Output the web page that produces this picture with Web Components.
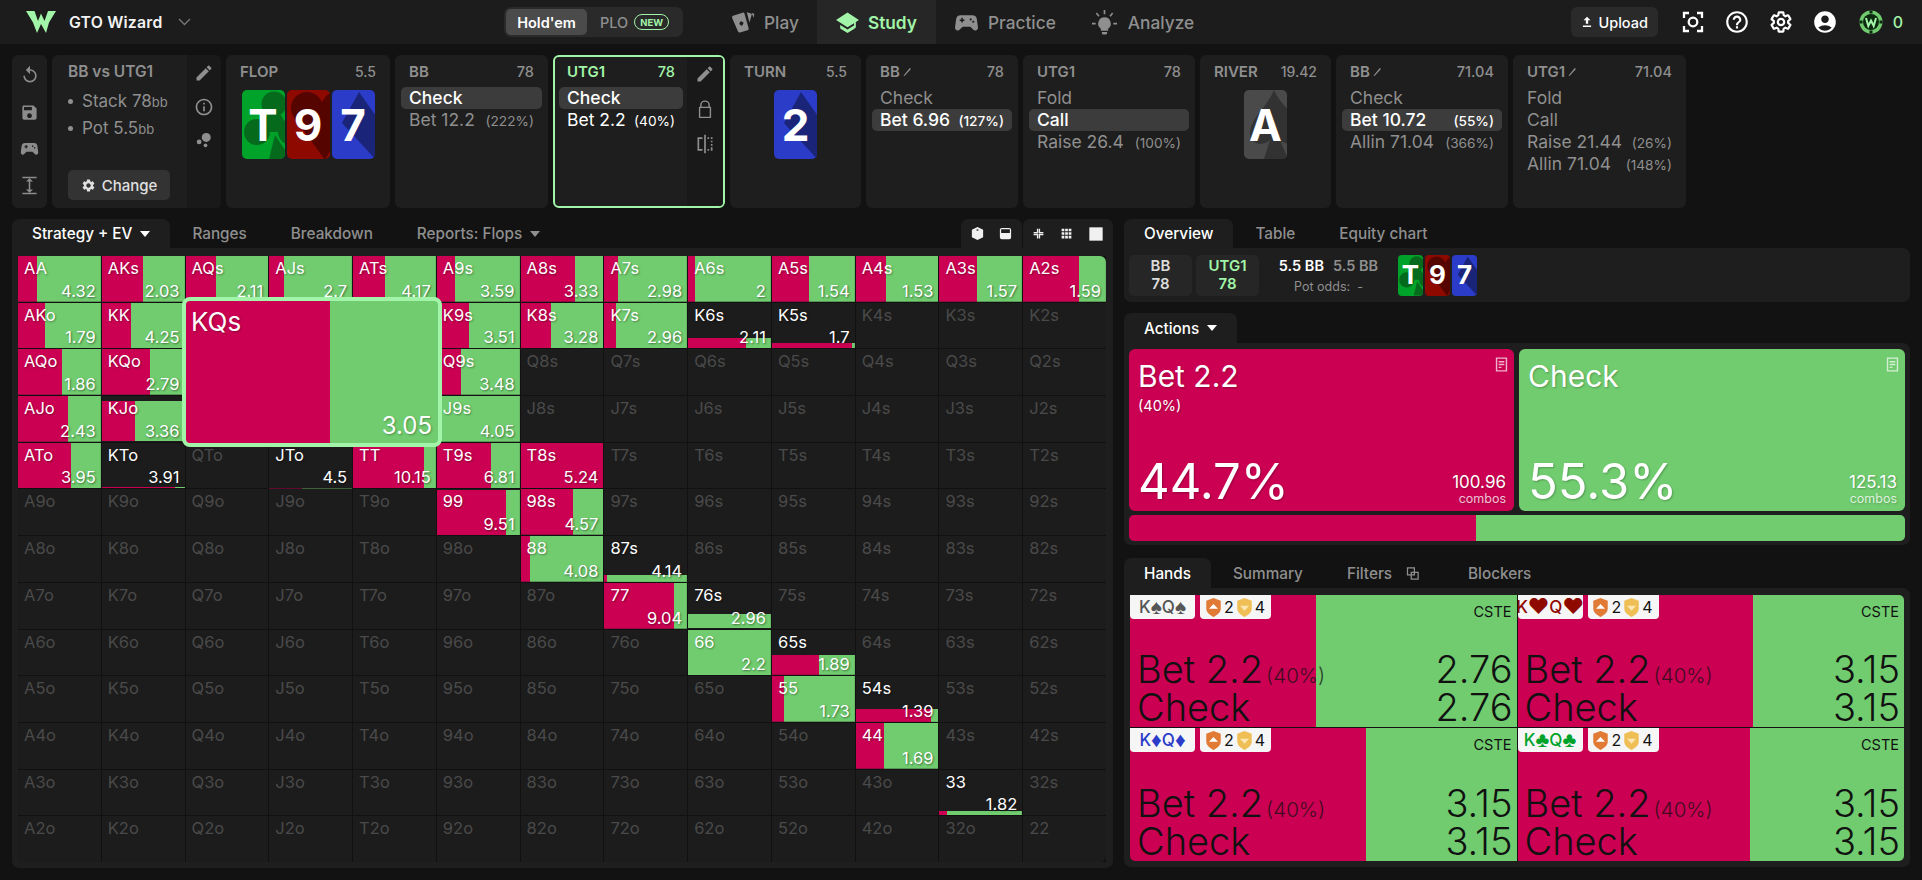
<!DOCTYPE html>
<html>
<head>
<meta charset="utf-8">
<title>GTO Wizard</title>
<style>
  html, body { margin: 0; height: 100%; }
  body {
    background: #121212;
    color: #fff;
    font-family: Inter, "Noto Sans", sans-serif;
    overflow: hidden;
  }
  .page { width: 1922px; height: 880px; display: flex; flex-direction: column; }
  .workspace { display: flex; gap: 11px; padding: 11px 12px 0; }
  .left-col { width: 1101px; display: flex; flex-direction: column; }
  .right-col { width: 786px; display: flex; flex-direction: column; }
</style>
</head>
<body>
<div class="page">
  <app-header></app-header>
  <spot-row>
    <tool-strip></tool-strip>
    <info-card></info-card>
    <street-card label="FLOP" pot="5.5" w="164">
      <poker-card rank="T" suit="c"></poker-card><poker-card rank="9" suit="h"></poker-card><poker-card rank="7" suit="d"></poker-card>
    </street-card>
    <spot-card label="BB" stack="78" w="153">
      <spot-action on>Check</spot-action>
      <spot-action pct="(222%)">Bet 12.2</spot-action>
    </spot-card>
    <spot-card label="UTG1" stack="78" w="172" current>
      <spot-action on>Check</spot-action>
      <spot-action pct="(40%)">Bet 2.2</spot-action>
    </spot-card>
    <street-card label="TURN" pot="5.5" w="131"><poker-card rank="2" suit="d"></poker-card></street-card>
    <spot-card label="BB" stack="78" w="152" edited>
      <spot-action>Check</spot-action>
      <spot-action on pct="(127%)">Bet 6.96</spot-action>
    </spot-card>
    <spot-card label="UTG1" stack="78" w="172">
      <spot-action>Fold</spot-action>
      <spot-action on>Call</spot-action>
      <spot-action pct="(100%)">Raise 26.4</spot-action>
    </spot-card>
    <street-card label="RIVER" pot="19.42" w="131"><poker-card rank="A" suit="s"></poker-card></street-card>
    <spot-card label="BB" stack="71.04" w="172" edited>
      <spot-action>Check</spot-action>
      <spot-action on pct="(55%)">Bet 10.72</spot-action>
      <spot-action pct="(366%)">Allin 71.04</spot-action>
    </spot-card>
    <spot-card label="UTG1" stack="71.04" w="173" edited>
      <spot-action>Fold</spot-action>
      <spot-action>Call</spot-action>
      <spot-action pct="(26%)">Raise 21.44</spot-action>
      <spot-action pct="(148%)">Allin 71.04</spot-action>
    </spot-card>
  </spot-row>
  <div class="workspace">
    <div class="left-col">
      <tab-bar>
        <tab-item active caret>Strategy + EV</tab-item>
        <tab-item>Ranges</tab-item>
        <tab-item>Breakdown</tab-item>
        <tab-item caret>Reports: Flops</tab-item>
        <view-tools slot="end"></view-tools>
      </tab-bar>
      <hand-matrix></hand-matrix>
    </div>
    <div class="right-col">
      <tab-bar>
        <tab-item active>Overview</tab-item>
        <tab-item>Table</tab-item>
        <tab-item>Equity chart</tab-item>
      </tab-bar>
      <overview-strip></overview-strip>
      <tab-bar style="margin-top:11px;height:30px">
        <tab-item active caret>Actions</tab-item>
      </tab-bar>
      <actions-panel>
        <action-card label="Bet 2.2" sub="(40%)" share="44.7%" combos="100.96" tone="red" style="width:385px"></action-card>
        <action-card label="Check" share="55.3%" combos="125.13" tone="green" style="width:386px"></action-card>
      </actions-panel>
      <tab-bar style="margin-top:13px;height:30px">
        <tab-item active>Hands</tab-item>
        <tab-item>Summary</tab-item>
        <tab-item copy>Filters</tab-item>
        <tab-item>Blockers</tab-item>
      </tab-bar>
      <hands-panel>
        <combo-card a="K" b="Q" suit="s" ev="2.76" red="48"></combo-card>
        <combo-card a="K" b="Q" suit="h" ev="3.15" red="61"></combo-card>
        <combo-card a="K" b="Q" suit="d" ev="3.15" red="61"></combo-card>
        <combo-card a="K" b="Q" suit="c" ev="3.15" red="60"></combo-card>
      </hands-panel>
    </div>
  </div>
</div>

<script>
const RED = '#cb0052';
const GREEN = '#70cc6f';
const MINT = '#a2f5a8';

const PATHS = {
  refresh: '<path d="M12 5V1L7 6l5 5V7c3.310 0 6 2.690 6 6s-2.690 6-6 6-6-2.690-6-6H4c0 4.420 3.580 8 8 8s8-3.580 8-8-3.580-8-8-8z"/>',
  save: '<path d="M17 3H5c-1.110 0-2 .9-2 2v14c0 1.100.89 2 2 2h14c1.100 0 2-.9 2-2V7l-4-4zm-5 16c-1.660 0-3-1.340-3-3s1.340-3 3-3 3 1.340 3 3-1.340 3-3 3zm3-10H5V5h10v4z"/>',
  pad: '<path fill-rule="evenodd" d="M6.500 5h11a4.600 4.600 0 0 1 4.500 4l1 7.600a2.600 2.600 0 0 1-4.600 2.100L15.700 16H8.300l-2.700 2.700A2.600 2.600 0 0 1 1 16.600L2 9a4.600 4.600 0 0 1 4.500-4zM7 7.500V9H5.500v1.500H7V12h1.500v-1.500H10V9H8.500V7.500zM16 8a1 1 0 1 0 0 2 1 1 0 0 0 0-2zm2.500 2.200a1 1 0 1 0 0 2 1 1 0 0 0 0-2z"/>',
  height: '<path d="M13 7h3.500L12 2.800 7.500 7H11v10H7.500l4.500 4.200 4.500-4.200H13zM3 .8h18v2H3zM3 21.200h18v2H3z"/>',
  edit: '<path d="M3 17.250V21h3.750L17.810 9.940l-3.750-3.750L3 17.250zM20.710 7.040c.39-.39.39-1.020 0-1.410l-2.340-2.340c-.39-.39-1.020-.39-1.410 0l-1.830 1.830 3.750 3.750 1.830-1.830z"/>',
  info: '<path d="M11 7h2v2h-2zm0 4h2v6h-2zm1-9C6.480 2 2 6.480 2 12s4.480 10 10 10 10-4.480 10-10S17.520 2 12 2zm0 18c-4.410 0-8-3.590-8-8s3.590-8 8-8 8 3.590 8 8-3.590 8-8 8z"/>',
  bubbles: '<circle cx="15" cy="8.500" r="6"/><circle cx="5.500" cy="14.500" r="3.200"/><circle cx="14" cy="19" r="2.500"/>',
  lock: '<path fill="none" stroke="currentColor" stroke-width="1.700" d="M7 10V7.500a5 5 0 0 1 10 0V10M5.500 10h13v12h-13z" stroke-linejoin="round"/>',
  split: '<path d="M11 1h2v22h-2zM3 4h6v2H5v12h4v2H3zM15 4h2v2h-2zM19 4h2v2h-2zM19 8h2v2h-2zM19 12h2v2h-2zM19 16h2v2h-2zM19 18h2v2h-2zM15 18h2v2h-2z"/>',
  gear: '<path d="M19.140 12.940c.04-.3.06-.61.06-.94 0-.32-.02-.64-.07-.94l2.030-1.580a.49.49 0 0 0 .12-.61l-1.920-3.320a.488.488 0 0 0-.59-.22l-2.390.96c-.5-.38-1.030-.7-1.620-.94l-.36-2.540a.484.484 0 0 0-.48-.41h-3.840c-.24 0-.43.17-.47.41l-.36 2.540c-.59.24-1.130.57-1.620.94l-2.390-.96c-.22-.08-.47 0-.59.22L2.740 8.870c-.12.21-.08.47.12.61l2.030 1.580c-.05.3-.09.63-.09.94s.02.64.07.94l-2.030 1.580a.49.49 0 0 0-.12.61l1.920 3.320c.12.22.37.29.59.22l2.390-.96c.5.38 1.030.7 1.620.94l.36 2.540c.05.24.24.41.48.41h3.840c.24 0 .44-.17.47-.41l.36-2.540c.59-.24 1.130-.56 1.620-.94l2.390.96c.22.08.47 0 .59-.22l1.920-3.320c.12-.22.07-.47-.12-.61l-2.010-1.580zM12 15.600c-1.980 0-3.600-1.620-3.600-3.600s1.620-3.600 3.600-3.600 3.600 1.620 3.600 3.600-1.620 3.600-3.600 3.600z"/>',
  gearline: '<path fill="none" stroke="currentColor" stroke-width="2.200" stroke-linejoin="round" d="M19.140 12.940c.04-.3.06-.61.06-.94 0-.32-.02-.64-.07-.94l2.030-1.580a.49.49 0 0 0 .12-.61l-1.920-3.320a.488.488 0 0 0-.59-.22l-2.390.96c-.5-.38-1.030-.7-1.620-.94l-.36-2.540a.484.484 0 0 0-.48-.41h-3.840c-.24 0-.43.17-.47.41l-.36 2.540c-.59.24-1.130.57-1.620.94l-2.390-.96c-.22-.08-.47 0-.59.22L2.740 8.870c-.12.21-.08.47.12.61l2.030 1.580c-.05.3-.09.63-.09.94s.02.64.07.94l-2.030 1.580a.49.49 0 0 0-.12.61l1.920 3.320c.12.22.37.29.59.22l2.390-.96c.5.38 1.030.7 1.620.94l.36 2.540c.05.24.24.41.48.41h3.840c.24 0 .44-.17.47-.41l.36-2.540c.59-.24 1.130-.56 1.620-.94l2.390.96c.22.08.47 0 .59-.22l1.920-3.320c.12-.22.07-.47-.12-.61l-2.010-1.580z"/><circle cx="12" cy="12" r="3.200" fill="none" stroke="currentColor" stroke-width="2.200"/>',
  cards: '<path d="M15.500 3l3.800 1.200c.6.200.8.700.7 1.200L18 12.500zM2.800 6.300l8.800-2.900c.8-.3 1.500.1 1.800.9l3.800 13.500c.2.8-.2 1.500-1 1.800l-7 2.100c-.8.2-1.500-.2-1.800-1L2 8.200c-.2-.8.100-1.600.800-1.900zM10 11l-1.600 2.800 2.700 1.800 1.500-2.800z" fill-rule="evenodd"/><path d="M20 3.500l2.500 1-.8 3.500z"/>',
  study: '<path d="M12 2.500L23 9.500l-3 2V17h-1.700v-4.200L12 16.500 1 9.500zM5 14.500l7 4.300 7-4.300v3.200L12 22l-7-4.300z"/>',
  bulb: '<path d="M12 7a6 6 0 0 0-3.500 10.900V20h7v-2.100A6 6 0 0 0 12 7zM9.500 21h5v1.500l-1 1h-3l-1-1z"/><path d="M11.200 0h1.600v4h-1.600zM3.600 3.400l1.200-1 2.400 3-1.200 1zM20.400 3.400l-1.200-1-2.400 3 1.200 1zM0 12.300h3.500v1.600H0zM20.500 12.300H24v1.600h-3.500z"/>',
  upload: '<path d="M12 3l6 6h-4v6h-4V9H6zM5 18h14v2.500H5z"/>',
  scan: '<path fill="none" stroke="currentColor" stroke-width="2.300" d="M3 8V3h5M16 3h5v5M21 16v5h-5M8 21H3v-5"/><circle cx="12" cy="12" r="4.300" fill="none" stroke="currentColor" stroke-width="2.300"/>',
  help: '<path d="M11 18h2v-2h-2v2zm1-16C6.480 2 2 6.480 2 12s4.480 10 10 10 10-4.480 10-10S17.520 2 12 2zm0 18c-4.410 0-8-3.590-8-8s3.590-8 8-8 8 3.590 8 8-3.590 8-8 8zm0-14c-2.210 0-4 1.790-4 4h2c0-1.100.9-2 2-2s2 .9 2 2c0 2-3 1.750-3 5h2c0-2.250 3-2.500 3-5 0-2.210-1.790-4-4-4z"/>',
  user: '<path d="M12 2C6.480 2 2 6.480 2 12s4.480 10 10 10 10-4.480 10-10S17.520 2 12 2zm0 4c1.930 0 3.500 1.570 3.500 3.500S13.930 13 12 13s-3.500-1.570-3.500-3.500S10.070 6 12 6zm0 14c-2.030 0-4.430-.82-6.140-2.880a9.947 9.947 0 0 1 12.280 0C16.430 19.180 14.030 20 12 20z"/>',
  chip: '<circle cx="12" cy="12" r="11.500" fill="#70cc6f"/><circle cx="12" cy="12" r="8" fill="#0d2a10"/><path d="M7 8l2.300 8L12 10.500 14.700 16 17 8" fill="none" stroke="#a2f5a8" stroke-width="2"/><path d="M10.500 .5h3v3h-3zM10.500 20.500h3v3h-3zM.5 10.500h3v3h-3zM20.500 10.500h3v3h-3z" fill="#0d2a10"/>',
  doc: '<path d="M4 2h16v20H4zM6 4v16h12V4zM8 7h8v2H8zM8 11h8v2H8zM8 15h4v2H8z" fill-rule="evenodd"/>',
  copy: '<path fill="none" stroke="currentColor" stroke-width="2" d="M4 3h11v11H4zM10 10h11v11H10z"/>',
  cube: '<path d="M12 1.500l9 4.500v12l-9 4.500L3 18V6zM12 5L9.500 6.300 12 7.500l2.500-1.200z" fill-rule="evenodd"/>',
  panel: '<path d="M6 3h12a3 3 0 0 1 3 3v12a3 3 0 0 1-3 3H6a3 3 0 0 1-3-3V6a3 3 0 0 1 3-3zm-1 2v6h14V5z" fill-rule="evenodd"/>',
  compress: '<path d="M3 9h6V3h2.500v8.500H3zM21 9h-6V3h-2.500v8.500H21zM3 15h6v6h2.500v-8.500H3zM21 15h-6v6h-2.500v-8.500H21z"/>',
  grid: '<path d="M3 3h5v5H3zM9.500 3h5v5h-5zM16 3h5v5h-5zM3 9.500h5v5H3zM9.500 9.500h5v5h-5zM16 9.500h5v5h-5zM3 16h5v5H3zM9.500 16h5v5h-5zM16 16h5v5h-5z"/>',
  square: '<path d="M2 2h20v20H2z"/>',
  slash: '<path d="M6 21l-2.500 1 1-2.500L17 4.500l2.500 2z"/>'
};

const icon = (name, size) =>
  `<svg viewBox="0 0 24 24" width="${size}" height="${size}" fill="currentColor" style="display:block;flex:none">${PATHS[name]}</svg>`;

const caret = (color = 'currentColor') =>
  `<svg viewBox="0 0 10 6" width="10" height="6" style="display:block;flex:none"><path d="M0 0h10L5 6z" fill="${color}"/></svg>`;

class AppHeader extends HTMLElement {
  constructor() {
    super();
    this.attachShadow({ mode: 'open' });
  }
  connectedCallback() {
    this.shadowRoot.innerHTML = `
      <style>
        :host { display: flex; align-items: stretch; height: 44px; background: #1c1c1c; flex: none; }
        .brand { width: 504px; padding-left: 26px; box-sizing: border-box; display: flex; align-items: center; }
        .brand svg.logo { width: 30px; height: 22px; margin-right: 13px; }
        .brand b { font-size: 15.800px; font-weight: 600; letter-spacing: .2px; color: #f2f2f2; }
        .brand .chev { margin-left: 16px; color: #777; }
        .toggle { margin: 7px 0; width: 179px; box-sizing: border-box; padding: 2px; background: #2a2a2a; border-radius: 7px; display: flex; align-items: center; font-size: 14.500px; font-weight: 600; }
        .toggle .on { width: 81px; height: 26px; border-radius: 5px; background: #4b4b4b; display: flex; align-items: center; justify-content: center; color: #fff; }
        .toggle .plo { margin-left: 13px; color: #8f8f8f; font-weight: 500; }
        .toggle .new { margin-left: 6px; width: 35px; height: 16px; box-sizing: border-box; border: 1px solid ${MINT}; border-radius: 9px; color: ${MINT}; font-size: 9.500px; font-weight: 700; display: flex; align-items: center; justify-content: center; }
        nav { margin-left: 29px; display: flex; }
        nav a { display: flex; align-items: center; gap: 8px; padding: 0 18px; font-size: 17.300px; font-weight: 500; color: #8f8f8f; }
        nav a.on { background: #262626; color: ${MINT}; font-weight: 600; padding-right: 19px; }
        nav a.wide { gap: 9px; }
        nav a.wider { gap: 11px; }
        .end { margin-left: auto; padding-right: 19px; display: flex; align-items: center; }
        .upload { width: 87px; height: 30px; margin-right: 23px; background: #2a2a2a; border-radius: 6px; display: flex; align-items: center; justify-content: center; gap: 4px; font-size: 14.500px; font-weight: 500; color: #fff; }
        .tools { display: flex; gap: 19px; color: #fff; align-items: center; }
        .zero { margin-left: 10px; color: ${MINT}; font-size: 16px; font-weight: 500; }
      </style>
      <div class="brand">
        <svg class="logo" viewBox="0 0 30 22"><path fill="${MINT}" d="M0 0h8.500l3.500 10 3-7.500L18.500 10 22 0h8l-7 11.500-3 10.500-5-9-4 9-4-10.500z"/></svg>
        <b>GTO Wizard</b>
        <svg class="chev" width="13" height="8" viewBox="0 0 13 8"><path d="M1 1l5.500 5.500L12 1" fill="none" stroke="currentColor" stroke-width="1.400"/></svg>
      </div>
      <div class="toggle"><span class="on">Hold'em</span><span class="plo">PLO</span><span class="new">NEW</span></div>
      <nav>
        <a>${icon('cards', 26)}Play</a>
        <a class="on">${icon('study', 25)}Study</a>
        <a class="wide">${icon('pad', 25)}Practice</a>
        <a class="wider">${icon('bulb', 25)}Analyze</a>
      </nav>
      <div class="end">
        <div class="upload">${icon('upload', 14)}Upload</div>
        <div class="tools">${icon('scan', 24)}${icon('help', 26)}${icon('gearline', 24)}${icon('user', 26)}</div>
        <div style="margin-left:21px">${icon('chip', 24)}</div>
        <span class="zero">0</span>
      </div>`;
  }
}

class SpotRow extends HTMLElement {
  constructor() {
    super();
    this.attachShadow({ mode: 'open' }).innerHTML = `
      <style>:host { display: flex; gap: 5px; padding: 11px 12px 0; height: 153px; flex: none; }</style>
      <slot></slot>`;
  }
}

class ToolStrip extends HTMLElement {
  constructor() {
    super();
    this.attachShadow({ mode: 'open' }).innerHTML = `
      <style>
        :host { width: 35px; background: #1e1e1e; border-radius: 6px; color: #8c8c8c; display: flex; flex-direction: column; align-items: center; justify-content: space-between; padding: 10px 0 13px; box-sizing: border-box; }
      </style>
      ${icon('refresh', 20)}${icon('save', 19)}${icon('pad', 19)}${icon('height', 19)}`;
  }
}

class InfoCard extends HTMLElement {
  constructor() {
    super();
    this.attachShadow({ mode: 'open' }).innerHTML = `
      <style>
        :host { width: 169px; display: flex; background: #1e1e1e; border-radius: 6px; overflow: hidden; color: #8f8f8f; }
        .body { flex: 1; padding: 8px 0 8px 16px; display: flex; flex-direction: column; }
        .title { font-size: 15.500px; font-weight: 600; line-height: 18px; margin-bottom: 7px; }
        .line { display: flex; align-items: baseline; font-size: 17px; line-height: 26px; }
        .line i { font-style: normal; font-size: 13px; }
        .line::before { content: ""; width: 5px; height: 5px; border-radius: 50%; background: #8f8f8f; margin: 0 9px 0 0; align-self: center; }
        .change { margin-top: auto; width: 102px; height: 30px; border-radius: 5px; background: #333; color: #e0e0e0; font-size: 15px; font-weight: 500; display: flex; align-items: center; justify-content: center; gap: 6px; }
        .side { width: 34px; background: #191919; display: flex; flex-direction: column; align-items: center; padding-top: 8px; gap: 14px; }
      </style>
      <div class="body">
        <div class="title">BB vs UTG1</div>
        <div class="line">Stack 78<i>bb</i></div>
        <div class="line">Pot 5.5<i>bb</i></div>
        <div class="change">${icon('gear', 15)}Change</div>
      </div>
      <div class="side">${icon('edit', 20)}${icon('info', 20)}${icon('bubbles', 18)}</div>`;
  }
}

class StreetCard extends HTMLElement {
  constructor() {
    super();
    this.attachShadow({ mode: 'open' });
  }
  connectedCallback() {
    this.shadowRoot.innerHTML = `
      <style>
        :host { display: flex; flex-direction: column; width: ${this.getAttribute('w')}px; background: #1e1e1e; border-radius: 6px; box-sizing: border-box; padding: 8px 14px 0; color: #8f8f8f; }
        .head { display: flex; justify-content: space-between; font-size: 15px; font-weight: 600; line-height: 17px; }
        .head span + span { font-weight: 500; font-size: 14px; }
        .cards { margin-top: 10px; display: flex; gap: 2px; justify-content: center; }
      </style>
      <div class="head"><span>${this.getAttribute('label')}</span><span>${this.getAttribute('pot')}</span></div>
      <div class="cards"><slot></slot></div>`;
  }
}

const SUITS = {
  c: ['#00a32a', '#066a1c', '<circle cx="32" cy="14" r="12.500"/><circle cx="15" cy="42" r="13"/><circle cx="49" cy="42" r="13"/><path d="M32 14L15 42h34zM33 45L27 69h22z"/>'],
  h: ['#8e0a00', '#560400', '<circle cx="20" cy="18" r="16"/><circle cx="50" cy="18" r="16"/><path d="M5.500 25L38 70 62 25 35 12z"/>'],
  d: ['#2a3cc8', '#1a2478', '<path d="M27 2L48 32 46 72 10 33z"/>'],
  s: ['#4a4a4a', '#323232', '<path d="M30 0C24 16 6 28 6 44c0 10 13 13 20 6l-6 19h24l-8-19c7 7 22 4 22-6C58 28 36 16 30 0z"/>']
};

class PokerCard extends HTMLElement {
  constructor() {
    super();
    this.attachShadow({ mode: 'open' });
  }
  connectedCallback() {
    const [bg, dark, shape] = SUITS[this.getAttribute('suit')];
    const mini = this.hasAttribute('mini');
    const w = mini ? 25 : 43;
    const h = mini ? 41 : 69;
    this.shadowRoot.innerHTML = `
      <style>
        :host { display: grid; width: ${w}px; height: ${h}px; border-radius: ${mini ? 4 : 5}px; overflow: hidden; background: ${bg}; flex: none; }
        svg, b { grid-area: 1 / 1; }
        svg { width: 100%; height: 100%; display: block; }
        b { place-self: center; font-size: ${mini ? 26 : 44}px; font-weight: 700; line-height: 1; color: #fff; }
      </style>
      <svg viewBox="0 0 43 69" fill="${dark}">${shape}</svg>
      <b>${this.getAttribute('rank')}</b>`;
  }
}

class SpotCard extends HTMLElement {
  constructor() {
    super();
    this.attachShadow({ mode: 'open' });
  }
  connectedCallback() {
    const current = this.hasAttribute('current');
    const edited = this.hasAttribute('edited');
    this.shadowRoot.innerHTML = `
      <style>
        :host { display: flex; width: ${this.getAttribute('w')}px; background: #1e1e1e; border-radius: 6px; box-sizing: border-box; overflow: hidden; color: ${current ? '#fff' : '#8f8f8f'}; ${current ? `border: 2px solid ${MINT};` : ''} }
        .main { flex: 1; min-width: 0; padding: ${current ? '6px 4px 0 4px' : '8px 6px 0 6px'}; }
        .head { display: flex; align-items: center; justify-content: space-between; padding: 0 8px; font-size: 15px; font-weight: 600; line-height: 17px; margin-bottom: 7px; color: ${current ? MINT : '#8f8f8f'}; }
        .head span { display: flex; align-items: center; gap: 2px; }
        .head span + span { font-size: 14.500px; font-weight: 500; }
        .side { width: 36px; background: #191919; display: flex; flex-direction: column; align-items: center; padding-top: 7px; gap: 15px; color: #8f8f8f; }
      </style>
      <div class="main">
        <div class="head"><span>${this.getAttribute('label')}${edited ? icon('slash', 11) : ''}</span><span>${this.getAttribute('stack')}</span></div>
        <slot></slot>
      </div>
      ${current ? `<div class="side">${icon('edit', 20)}${icon('lock', 20)}${icon('split', 20)}</div>` : ''}`;
  }
}

class SpotAction extends HTMLElement {
  constructor() {
    super();
    this.attachShadow({ mode: 'open' });
  }
  connectedCallback() {
    const on = this.hasAttribute('on');
    const pct = this.getAttribute('pct');
    this.shadowRoot.innerHTML = `
      <style>
        :host { display: flex; justify-content: space-between; align-items: baseline; height: 22px; line-height: 22px; padding: 0 8px; border-radius: 5px; font-size: 17.500px; white-space: nowrap; ${on ? 'background: #3c3c3c; color: #fff; font-weight: 500;' : ''} }
        small { font-size: 13.700px; }
      </style>
      <span><slot></slot></span>${pct ? `<small>${pct}</small>` : ''}`;
  }
}

class TabBar extends HTMLElement {
  constructor() {
    super();
    this.attachShadow({ mode: 'open' }).innerHTML = `
      <style>
        :host { display: flex; height: 29px; flex: none; }
        .end { margin-left: auto; display: flex; }
      </style>
      <slot></slot><div class="end"><slot name="end"></slot></div>`;
  }
}

class TabItem extends HTMLElement {
  constructor() {
    super();
    this.attachShadow({ mode: 'open' });
  }
  connectedCallback() {
    const active = this.hasAttribute('active');
    const copy = this.hasAttribute('copy');
    const trail = this.hasAttribute('caret') ? caret() : copy ? icon('copy', 15) : '';
    this.shadowRoot.innerHTML = `
      <style>
        :host { display: flex; align-items: center; gap: ${copy ? 13 : 8}px; padding: 0 ${copy ? 26 : active ? 20 : 22}px 0 ${active ? 20 : 22}px; font-size: 15.300px; font-weight: 500; white-space: nowrap; border-radius: 7px 7px 0 0; color: ${active ? '#fff' : '#8f8f8f'}; ${active ? 'background: #1e1e1e;' : ''} }
      </style>
      <slot></slot>${trail}`;
  }
}

class ViewTools extends HTMLElement {
  constructor() {
    super();
    this.attachShadow({ mode: 'open' }).innerHTML = `
      <style>
        :host { display: flex; gap: 1px; color: #f0f0f0; }
        div { display: flex; align-items: center; justify-content: center; background: #1e1e1e; border-radius: 7px 7px 0 0; width: 61px; gap: 13px; }
        div + div { width: 90px; gap: 15px; }
      </style>
      <div>${icon('cube', 15)}${icon('panel', 15)}</div>
      <div>${icon('compress', 13)}${icon('grid', 13)}${icon('square', 16)}</div>`;
  }
}

class HandCell extends HTMLElement {
  constructor() {
    super();
    this.attachShadow({ mode: 'open' });
  }
  connectedCallback() {
    const value = this.getAttribute('value');
    const red = this.getAttribute('red');
    const bar = this.getAttribute('bar') || 100;
    const inRange = value !== null;
    const fill = inRange
      ? `background: linear-gradient(to right, ${RED} ${red}%, ${GREEN} ${red}%) bottom / 100% ${bar}% no-repeat #1c1c1c;`
      : 'background: #1c1c1c;';
    this.shadowRoot.innerHTML = `
      <style>
        :host { display: flex; flex-direction: column; justify-content: space-between; padding: 2px 5px 1px 6px; overflow: hidden; min-width: 0; min-height: 0; line-height: 20px; font-size: 16.500px; white-space: nowrap; ${fill} ${this.getAttribute('corner') ? `border-${this.getAttribute('corner')}-radius: 6px;` : ''} }
        .name { color: ${inRange ? '#fff' : '#4a4a4a'}; ${inRange ? 'text-shadow: 1px 1px 2px rgba(0,0,0,.35);' : ''} }
        .value { align-self: flex-end; color: #fff; text-shadow: 1px 1px 2px rgba(0,0,0,.45); }
      </style>
      <span class="name">${this.getAttribute('name') || ''}</span>
      ${value ? `<span class="value">${value}</span>` : ''}`;
  }
}

// value, red share of the bar, bar height in % of the cell
const RANGE = {
  AA: ['4.32', 23], AKs: ['2.03', 49], AQs: ['2.11', 37], AJs: ['2.7', 18], ATs: ['4.17', 39],
  A9s: ['3.59', 22], A8s: ['3.33', 66], A7s: ['2.98', 17], A6s: ['2', 9], A5s: ['1.54', 45],
  A4s: ['1.53', 36], A3s: ['1.57', 46], A2s: ['1.59', 67],
  AKo: ['1.79', 33], KK: ['4.25', 35], K9s: ['3.51', 39], K8s: ['3.28', 37], K7s: ['2.96', 14],
  K6s: ['2.11', 70, 24], K5s: ['1.7', 96, 13],
  AQo: ['1.86', 53], KQo: ['2.79', 58], Q9s: ['3.48', 29],
  AJo: ['2.43', 60], KJo: ['3.36', 40, 88], J9s: ['4.05', 0],
  ATo: ['3.95', 64], KTo: ['3.91', 88, 3], JTo: ['4.5', 40, 1], TT: ['10.15', 86], T9s: ['6.81', 65], T8s: ['5.24', 100],
  '99': ['9.51', 83, 98], '98s': ['4.57', 63],
  '88': ['4.08', 11], '87s': ['4.14', 4, 15],
  '77': ['9.04', 84], '76s': ['2.96', 0, 31],
  '66': ['2.2', 0], '65s': ['1.89', 57, 44],
  '55': ['1.73', 14], '54s': ['1.39', 91, 28],
  '44': ['1.69', 34],
  '33': ['1.82', 10, 9]
};

class HandMatrix extends HTMLElement {
  constructor() {
    super();
    this.attachShadow({ mode: 'open' });
  }
  connectedCallback() {
    const ranks = 'AKQJT98765432';
    let cells = '';
    for (let r = 0; r < 13; r++) {
      for (let c = 0; c < 13; c++) {
        const name = r === c ? ranks[r] + ranks[c]
          : r < c ? ranks[r] + ranks[c] + 's'
          : ranks[c] + ranks[r] + 'o';
        const d = RANGE[name];
        const corner = r === 0 && c === 12 ? 'top-right' : r === 12 && c === 12 ? 'bottom-right' : '';
        // the nine cells under the enlarged KQs stay empty
        const covered = r >= 1 && r <= 3 && c >= 2 && c <= 4;
        cells += `<hand-cell${covered ? '' : ` name="${name}"`}${d ? ` value="${d[0]}" red="${d[1]}" bar="${d[2] || 100}"` : ''}${corner ? ` corner="${corner}"` : ''}></hand-cell>`;
      }
    }
    this.shadowRoot.innerHTML = `
      <style>
        :host { display: block; background: #1e1e1e; padding: 8px 7px 6px 6px; height: 620px; box-sizing: border-box; border-radius: 0 0 7px 7px; }
        .grid { position: relative; height: 606px; display: grid; gap: 1px; grid-template-columns: repeat(13, 1fr); grid-template-rows: repeat(13, 1fr); background: #111; }
        .hero { position: absolute; left: 164px; top: 41px; width: 260px; height: 150px; box-sizing: border-box; border: 4px solid ${MINT}; border-radius: 8px; background: linear-gradient(to right, ${RED} 57%, ${GREEN} 57%); display: flex; flex-direction: column; justify-content: space-between; padding: 5px 6px 1px 5px; text-shadow: 1px 1px 2px rgba(0,0,0,.3); }
        .hero span { font-size: 24px; line-height: 32px; }
        .hero span:first-child { font-size: 26px; }
        .hero span + span { align-self: flex-end; }
      </style>
      <div class="grid">${cells}
        <div class="hero"><span>KQs</span><span>3.05</span></div>
      </div>`;
  }
}

class OverviewStrip extends HTMLElement {
  constructor() {
    super();
    this.attachShadow({ mode: 'open' }).innerHTML = `
      <style>
        :host { display: flex; align-items: center; height: 54px; background: #1e1e1e; border-radius: 0 7px 7px 7px; padding: 0 5px; box-sizing: border-box; flex: none; }
        .seat { width: 63px; height: 41px; background: #262626; border-radius: 5px; margin-right: 4px; font-size: 15px; font-weight: 600; line-height: 18px; color: #dcdcdc; display: flex; flex-direction: column; align-items: center; justify-content: center; }
        .seat.on { color: ${MINT}; }
        .pot { margin: 0 17px 0 13px; width: 105px; display: flex; flex-direction: column; align-items: center; gap: 5px; }
        .pot div { display: flex; gap: 9px; font-size: 14.500px; font-weight: 600; color: #fff; }
        .pot div span + span { color: #8f8f8f; }
        .pot p { margin: 0; font-size: 12.500px; color: #8f8f8f; }
        .cards { display: flex; gap: 2px; }
      </style>
      <div class="seat"><span>BB</span><span>78</span></div>
      <div class="seat on"><span>UTG1</span><span>78</span></div>
      <div class="pot"><div><span>5.5 BB</span><span>5.5 BB</span></div><p>Pot odds:&nbsp; -</p></div>
      <div class="cards">
        <poker-card mini rank="T" suit="c"></poker-card><poker-card mini rank="9" suit="h"></poker-card><poker-card mini rank="7" suit="d"></poker-card>
      </div>`;
  }
}

class ActionsPanel extends HTMLElement {
  constructor() {
    super();
    this.attachShadow({ mode: 'open' }).innerHTML = `
      <style>
        :host { display: block; background: #1e1e1e; border-radius: 0 7px 7px 7px; height: 202px; padding: 6px 5px 0; box-sizing: border-box; flex: none; }
        .cards { display: flex; gap: 5px; height: 162px; }
        .bar { margin-top: 4px; height: 26px; border-radius: 5px; background: linear-gradient(to right, ${RED} 44.700%, ${GREEN} 44.700%); }
      </style>
      <div class="cards"><slot></slot></div>
      <div class="bar"></div>`;
  }
}

class ActionCard extends HTMLElement {
  constructor() {
    super();
    this.attachShadow({ mode: 'open' });
  }
  connectedCallback() {
    const tone = this.getAttribute('tone') === 'red' ? RED : GREEN;
    const sub = this.getAttribute('sub');
    this.shadowRoot.innerHTML = `
      <style>
        :host { position: relative; display: flex; flex-direction: column; box-sizing: border-box; background: ${tone}; border-radius: 6px; padding: 10px 8px 1px 9px; color: #fff; text-shadow: 1px 1px 2px rgba(0,0,0,.25); }
        .label { font-size: 30px; line-height: 34px; }
        .sub { font-size: 14.500px; line-height: 18px; margin-top: 4px; }
        .foot { margin-top: auto; display: flex; justify-content: space-between; align-items: flex-end; }
        .share { font-size: 49px; line-height: 56px; }
        .combos { text-align: right; font-size: 17px; line-height: 20px; padding-bottom: 4px; }
        .combos small { display: block; font-size: 12.500px; line-height: 14px; opacity: .75; }
        .doc { position: absolute; top: 7px; right: 4px; opacity: .7; }
      </style>
      <div class="doc">${icon('doc', 17)}</div>
      <div class="label">${this.getAttribute('label')}</div>
      ${sub ? `<div class="sub">${sub}</div>` : ''}
      <div class="foot"><div class="share">${this.getAttribute('share')}</div><div class="combos">${this.getAttribute('combos')}<small>combos</small></div></div>`;
  }
}

class HandsPanel extends HTMLElement {
  constructor() {
    super();
    this.attachShadow({ mode: 'open' }).innerHTML = `
      <style>
        :host { display: block; background: #1e1e1e; border-radius: 0 7px 7px 7px; padding: 7px 6px 6px; box-sizing: border-box; height: 279px; flex: none; }
        .grid { height: 266px; display: grid; grid-template-columns: 1fr 1fr; grid-template-rows: 132px 133px; gap: 1px; background: #111; border-radius: 5px; }
        ::slotted(:nth-child(1)) { border-top-left-radius: 5px; }
        ::slotted(:nth-child(2)) { border-top-right-radius: 5px; }
        ::slotted(:nth-child(3)) { border-bottom-left-radius: 5px; }
        ::slotted(:nth-child(4)) { border-bottom-right-radius: 5px; }
      </style>
      <div class="grid"><slot></slot></div>`;
  }
}

const SUIT_TEXT = {
  s: ['♠', '#555555'],
  h: ['♥', '#8e0a00'],
  d: ['♦', '#2a3cc8'],
  c: ['♣', '#00a32a']
};

const shield = (color, up) =>
  `<svg width="15" height="19" viewBox="0 0 16 21"><path fill="${color}" d="M8 0l8 3v9c0 4-4 7-8 9-4-2-8-5-8-9V3z"/><path fill="${up ? '#fff' : '#fbe6b4'}" d="${up ? 'M8 6.500l5 5.500H3z' : 'M3 8.500h10L8 14z'}"/></svg>`;

class ComboCard extends HTMLElement {
  constructor() {
    super();
    this.attachShadow({ mode: 'open' });
  }
  connectedCallback() {
    const [glyph, color] = SUIT_TEXT[this.getAttribute('suit')];
    const red = this.getAttribute('red');
    const ev = this.getAttribute('ev');
    const a = this.getAttribute('a');
    const b = this.getAttribute('b');
    this.shadowRoot.innerHTML = `
      <style>
        :host { display: flex; flex-direction: column; min-height: 0; min-width: 0; background: linear-gradient(to right, ${RED} ${red}%, ${GREEN} ${red}%); color: #111; }
        .top { display: flex; align-items: flex-start; }
        .tag { height: 24px; background: #f6f6f6; border-radius: 0 0 4px 4px; display: flex; align-items: center; font-size: 16px; }
        .hand { width: 65px; justify-content: center; font-weight: 500; font-size: 17px; color: ${color}; }
        .hand i { font-style: normal; font-size: 21px; line-height: 24px; }
        .block { width: 71px; margin-left: 5px; justify-content: center; gap: 3px; }
        .cste { margin: 9px 5px 0 auto; font-size: 14.500px; line-height: 16px; }
        .rows { margin-top: auto; padding: 0 4px 1px 7px; }
        .row { display: flex; align-items: baseline; font-size: 38px; line-height: 38px; font-weight: 300; height: 38px; white-space: nowrap; }
        .row small { font-size: 20.500px; margin-left: 3px; opacity: .75; }
        .row em { font-style: normal; margin-left: auto; }
      </style>
      <div class="top">
        <div class="tag hand">${a}<i>${glyph}</i>${b}<i>${glyph}</i></div>
        <div class="tag block">${shield('#e07a35', true)}<span>2</span>${shield('#efbf55', false)}<span>4</span></div>
        <div class="cste">CSTE</div>
      </div>
      <div class="rows">
        <div class="row">Bet 2.2<small>(40%)</small><em>${ev}</em></div>
        <div class="row">Check<em>${ev}</em></div>
      </div>`;
  }
}

customElements.define('app-header', AppHeader);
customElements.define('spot-row', SpotRow);
customElements.define('tool-strip', ToolStrip);
customElements.define('info-card', InfoCard);
customElements.define('street-card', StreetCard);
customElements.define('poker-card', PokerCard);
customElements.define('spot-card', SpotCard);
customElements.define('spot-action', SpotAction);
customElements.define('tab-bar', TabBar);
customElements.define('tab-item', TabItem);
customElements.define('view-tools', ViewTools);
customElements.define('hand-cell', HandCell);
customElements.define('hand-matrix', HandMatrix);
customElements.define('overview-strip', OverviewStrip);
customElements.define('actions-panel', ActionsPanel);
customElements.define('action-card', ActionCard);
customElements.define('hands-panel', HandsPanel);
customElements.define('combo-card', ComboCard);
</script>
</body>
</html>
